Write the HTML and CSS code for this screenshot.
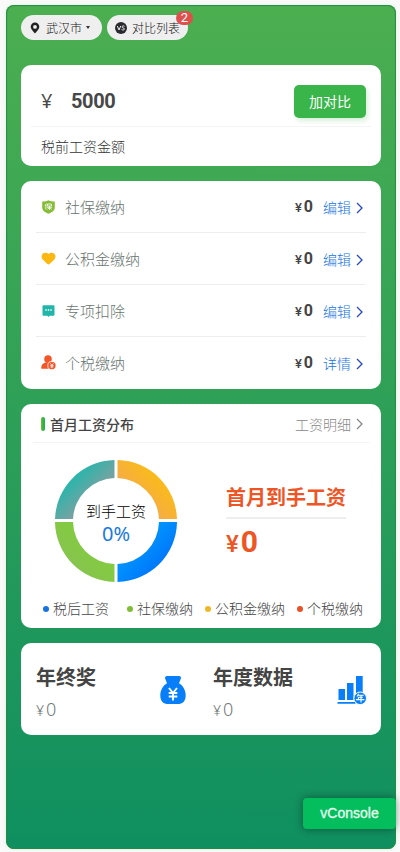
FILE: index.html
```html
<!DOCTYPE html>
<html lang="zh-CN">
<head>
<meta charset="utf-8">
<title>工资计算</title>
<link rel="stylesheet" href="styles.css">
</head>
<body>
<main class="app">
  <nav class="top">
    <button class="pill city">
      <svg width="10" height="12" viewBox="0 0 10 12"><path fill="#222" fill-rule="evenodd" d="M5 .5a4.3 4.3 0 0 0-4.3 4.3C.7 7.5 5 11.5 5 11.5s4.3-4 4.3-6.700A4.300 4.300 0 0 0 5 .5zM5 3a1.900 1.900 0 1 1 0 3.800A1.900 1.900 0 0 1 5 3z"/></svg>
      <span>武汉市</span><i class="caret"></i>
    </button>
    <button class="pill compare">
      <svg width="12" height="12" viewBox="0 0 12 12"><circle cx="6" cy="6" r="6" fill="#292b30"/><path d="M2.300 4l1.700 4 1.700-4M9.500 4.300C8.500 3.500 6.900 3.900 7 5c.1 1.100 2.500.8 2.400 2-.1 1.200-1.900 1.300-2.800.5" fill="none" stroke="#eee" stroke-width="1"/></svg>
      <span>对比列表</span><b class="badge">2</b>
    </button>
  </nav>

  <section class="card salary">
    <div class="salary-row"><span class="yen">¥</span><strong>5000</strong><button class="add">加对比</button></div>
    <p>税前工资金额</p>
  </section>

  <section class="card items">
    <div class="item">
      <svg width="14" height="14" viewBox="0 0 14 14"><path fill="#86bd36" d="M7 .2C5 1.200 3 1.500.7 1.500v5.700c0 3.400 2.700 4.900 6.300 6.600 3.600-1.700 6.300-3.200 6.300-6.600V1.500C11 1.500 9 1.200 7 .2z"/><path d="M5 3.500L3.600 6M4.400 5v4.500M6 4h4v2H6zM8 6v4M5.500 7.300h5M8 7.500L6 9.300M8 7.500l2.200 1.800" fill="none" stroke="#fff" stroke-width=".8"/></svg>
      <span class="name">社保缴纳</span><span class="amount"><small>¥</small>0</span><a>编辑<svg class="arrow" width="7" height="12" viewBox="0 0 7 12"><path d="M1 1l5 5-5 5"/></svg></a>
    </div>
    <div class="item">
      <svg width="14" height="14" viewBox="0 0 14 14"><path fill="#fbb811" d="M7 2.100C5.500.2 2.800.2 1.200 1.800c-1.600 1.600-1.500 4.100 0 5.700L5.900 12.100c.6.600 1.600.6 2.200 0L12.800 7.500c1.500-1.600 1.600-4.100 0-5.700C11.200.2 8.500.2 7 2.100z"/></svg>
      <span class="name">公积金缴纳</span><span class="amount"><small>¥</small>0</span><a>编辑<svg class="arrow" width="7" height="12" viewBox="0 0 7 12"><path d="M1 1l5 5-5 5"/></svg></a>
    </div>
    <div class="item">
      <svg width="14" height="14" viewBox="0 0 14 14"><path fill="#22b5aa" d="M2 1.200h10a1 1 0 0 1 1 1v8.500a1 1 0 0 1-1 1H8.200L7 12.900 5.800 11.700H2a1 1 0 0 1-1-1V2.200a1 1 0 0 1 1-1z"/><path stroke="#fff" stroke-width="1.300" d="M3.800 6h1.400M6.300 6h1.400M8.800 6h1.400"/></svg>
      <span class="name">专项扣除</span><span class="amount"><small>¥</small>0</span><a>编辑<svg class="arrow" width="7" height="12" viewBox="0 0 7 12"><path d="M1 1l5 5-5 5"/></svg></a>
    </div>
    <div class="item">
      <svg width="15" height="15" viewBox="0 0 15 15"><g fill="#f4562a"><circle cx="7" cy="4" r="3.800"/><path d="M5 7.200h4l2 6.500H.3v-1.500C.3 9.500 2.500 8.200 5 7.200z"/><circle cx="10.900" cy="10.600" r="4.100" stroke="#fff" stroke-width=".8"/></g><path d="M9.400 8.400l1.500 2 1.500-2M10.900 10.400v2.700M9.300 10.600h3.200M9.500 11.900h2.800" fill="none" stroke="#fff" stroke-width=".8"/></svg>
      <span class="name">个税缴纳</span><span class="amount"><small>¥</small>0</span><a>详情<svg class="arrow" width="7" height="12" viewBox="0 0 7 12"><path d="M1 1l5 5-5 5"/></svg></a>
    </div>
  </section>

  <section class="card chart">
    <header><i class="mark"></i><h2>首月工资分布</h2><a class="detail">工资明细<svg class="arrow" width="7" height="12" viewBox="0 0 7 12"><path d="M1 1l5 5-5 5"/></svg></a></header>
    <div class="chart-body">
      <div class="donut">
        <svg width="124" height="124" viewBox="0 0 124 124">
          <defs>
            <linearGradient id="teal" x1="0" y1="0" x2="1" y2="1"><stop offset=".3" stop-color="#29b6ab"/><stop offset=".7" stop-color="#899da0"/></linearGradient>
            <linearGradient id="gold" x1="0" y1="1" x2="1" y2="0"><stop offset=".2" stop-color="#f3a659"/><stop offset=".65" stop-color="#f9b91f"/></linearGradient>
            <linearGradient id="lime" x1="0" y1="1" x2="1" y2="0"><stop offset=".3" stop-color="#87c44d"/><stop offset=".8" stop-color="#80cf3b"/></linearGradient>
            <linearGradient id="blue" x1="0" y1="0" x2="1" y2="1"><stop offset=".2" stop-color="#00a2ff"/><stop offset=".7" stop-color="#0078fa"/></linearGradient>
          </defs>
          <path fill="url(#teal)" d="M60.500 1v18A43 43 0 0 0 19 60H1A61 61 0 0 1 60.500 1z"/>
          <path fill="url(#gold)" d="M63.500 1A61 61 0 0 1 123 60h-18A43 43 0 0 0 63.500 19z"/>
          <path fill="url(#lime)" d="M1 63h18A43 43 0 0 0 60.500 105v18A61 61 0 0 1 1 63z"/>
          <path fill="url(#blue)" d="M123 63A61 61 0 0 1 63.500 123v-18A43 43 0 0 0 105 63z"/>
        </svg>
        <div class="center"><span>到手工资</span><b>0%</b></div>
      </div>
      <div class="net"><h3>首月到手工资</h3><p><small>¥</small>0</p></div>
    </div>
    <ul class="legend"><li class="l-blue">税后工资</li><li class="l-green">社保缴纳</li><li class="l-gold">公积金缴纳</li><li class="l-red">个税缴纳</li></ul>
  </section>

  <section class="card year">
    <div class="half">
      <div><h3>年终奖</h3><p><small>¥</small>0</p></div>
      <svg width="26" height="28" viewBox="0 0 26 28"><path fill="#087ff8" d="M7 0h12c1.700 0 2.500 1.500 1.700 3L19 7.300c4 2.200 6.700 7 6.700 12.200 0 6-3.200 8.500-8 8.500H8.300c-4.800 0-8-2.500-8-8.500C.3 14.300 3 9.500 7 7.300L5.300 3C4.600 1.500 5.300 0 7 0z"/><path d="M9 12l4 5 4-5M13 17v7.500M8.700 17h8.600M8.700 20.500h8.600" fill="none" stroke="#fff" stroke-width="1.900"/></svg>
    </div>
    <div class="half">
      <div><h3>年度数据</h3><p><small>¥</small>0</p></div>
      <svg class="bars" width="30" height="30" viewBox="0 0 30 30"><path fill="#087ff8" d="M1.500 13h6.500v11H1.500zM10 7h6.500v17H10zM19 0h6.700v18H19zM.5 26h18v1.800H.5z"/><circle cx="23.200" cy="22.300" r="6.300" fill="#087ff8" stroke="#fff"/><path d="M21.700 17.800l-1.800 2.700M21.200 19.300h5.500M21.400 21.300v2.100M21.400 21.300h4.500M19 23.600h8.400M24 19.300v7.300" fill="none" stroke="#fff" stroke-width="1.100"/></svg>
    </div>
  </section>
  <button class="vconsole">vConsole</button>
</main>
</body>
</html>
```
FILE: styles.css
```css
* { box-sizing: border-box; margin: 0; padding: 0; }
body { height: 852px; padding: 5px 4px 3px 6px; background: #f9faf9; font-family: "Noto Sans", "Noto Sans CJK SC", sans-serif; font-weight: 300; overflow: hidden; }
button { border: 0; font: inherit; }
svg { display: block; flex: none; }
.app { position: relative; height: 844px; padding: 10px 15px 0; border-radius: 8px; background: linear-gradient(#4caf50, #0f8f60); box-shadow: inset 0 0 1px 1px #238d45, 0 0 4px #e1f3e2; }
.top { display: flex; gap: 5px; height: 25px; }
.pill { position: relative; display: flex; align-items: center; height: 25px; border-radius: 13px; background: #efefef; color: #111; font-size: 12px; line-height: 27px; }
.pill span { padding-top: 1px; }
.city { width: 81px; padding-left: 9px; }
.city span { margin-left: 6px; }
.caret { margin-left: 4px; border: 2px solid transparent; border-top: 3px solid #333; border-bottom: 0; }
.compare { width: 81px; padding-left: 8px; }
.compare span { margin-left: 5px; }
.badge { position: absolute; top: -4px; right: -5px; width: 17px; height: 14px; border-radius: 7px; background: #dd504c; color: #fff; font: 13px/14px Roboto, sans-serif; text-align: center; }
.card { border-radius: 10px; background: #fff; }
.salary { height: 101px; margin-top: 25px; padding: 0 10px; }
.salary-row { display: flex; align-items: center; height: 62px; padding: 11px 5px 0 10px; border-bottom: 1px solid #f4f4f4; color: #484848; }
.yen { width: 30px; font-size: 20px; font-weight: 400; line-height: 30px; }
.salary strong { font: 700 20px/30px Roboto, sans-serif; letter-spacing: -.4px; }
.add { width: 72px; height: 33px; margin-left: auto; border-radius: 5px; background: #39b54a; color: #fff; font-size: 14px; font-weight: 400; line-height: 31px; box-shadow: 2px 3px 5px #d8f0da; }
.salary p { padding-left: 10px; color: #333; font-size: 14px; line-height: 39px; }
.items { height: 208px; margin-top: 15px; padding: 0 15px; }
.item { display: flex; align-items: center; height: 52px; padding: 0 3px 0 5px; border-bottom: 1px solid #eee; }
.item:last-child { border-color: transparent; }
.item > svg { width: 15px; }
.name { margin-left: 9px; color: #68746f; font-size: 15px; line-height: 22px; }
.amount { margin: 2px 0 0 auto; color: #444; font: 700 16px/20px Roboto, sans-serif; }
.amount small { margin-right: 2px; font-size: 13px; font-weight: 500; }
.item a { display: flex; align-items: center; gap: 5px; margin: 3px 0 0 10px; color: #1673df; font-size: 14px; line-height: 20px; }
.arrow path { fill: none; stroke: #2847c4; stroke-width: 1.3; }
.chart { height: 224px; margin-top: 15px; padding: 0 12px; }
.chart header { display: flex; align-items: center; height: 39px; padding: 1px 6px 0 8px; border-bottom: 1px solid #f3f3f3; }
.mark { width: 4px; height: 14px; border-radius: 2px; background: linear-gradient(90deg, #85b931, #23b44b 60%); }
.chart h2 { margin-left: 5px; color: #444; font-size: 14px; font-weight: 500; }
.detail { display: flex; align-items: center; gap: 5px; margin-left: auto; color: #888; font-size: 14px; }
.detail .arrow path { stroke: #888; }
.chart-body { display: flex; height: 153px; padding: 16px 0 0 21px; }
.donut { display: grid; width: 124px; height: 124px; }
.donut > * { grid-area: 1 / 1; }
.center { display: flex; flex-direction: column; align-items: center; padding-top: 41px; color: #000; font-size: 15px; line-height: 22px; }
.center b { color: #1979df; font-size: 20px; font-weight: 400; line-height: 23px; }
.net { width: 120px; margin: 23px 0 0 48px; color: #ee5525; }
.net h3 { height: 37px; border-bottom: 2px solid #eee; font-size: 20px; font-weight: 700; line-height: 32px; white-space: nowrap; }
.net p { font: 700 30px/46px Roboto, sans-serif; }
.net small { margin-right: 2px; font-size: 24px; font-weight: 500; }
.legend { display: flex; padding: 3px 5px 0 10px; list-style: none; color: #444; font-size: 14px; line-height: 20px; white-space: nowrap; }
.legend li { display: flex; align-items: center; gap: 4px; }
.legend li::before { width: 6px; height: 6px; border-radius: 50%; background: currentColor; content: ""; }
.l-blue::before { color: #1673df; }
.l-green { margin-left: 18px; }
.l-gold { margin-left: 12px; }
.l-red { margin-left: 12px; }
.l-green::before { color: #82bd37; }
.l-gold::before { color: #edb825; }
.l-red::before { color: #e85127; }
.year { display: flex; gap: 27px; height: 92px; margin-top: 15px; padding: 19px 14px 0 15px; }
.half { display: flex; justify-content: space-between; width: 150px; }
.half:last-child { width: 154px; }
.half > svg { margin-top: 14px; }
.half h3 { color: #444; font-size: 20px; font-weight: 700; line-height: 32px; white-space: nowrap; }
.half p { color: #707878; font-size: 18px; line-height: 31px; }
.half small { margin-right: 2px; font-size: 14px; }
.vconsole { position: absolute; right: 0; bottom: 20px; width: 93px; height: 31px; border-radius: 4px; background: #04be5e; color: #e5fff0; font: 14px/31px "Liberation Sans", sans-serif; -webkit-text-stroke: .3px; box-shadow: 0 0 8px rgba(0,0,0,.4); }
```
